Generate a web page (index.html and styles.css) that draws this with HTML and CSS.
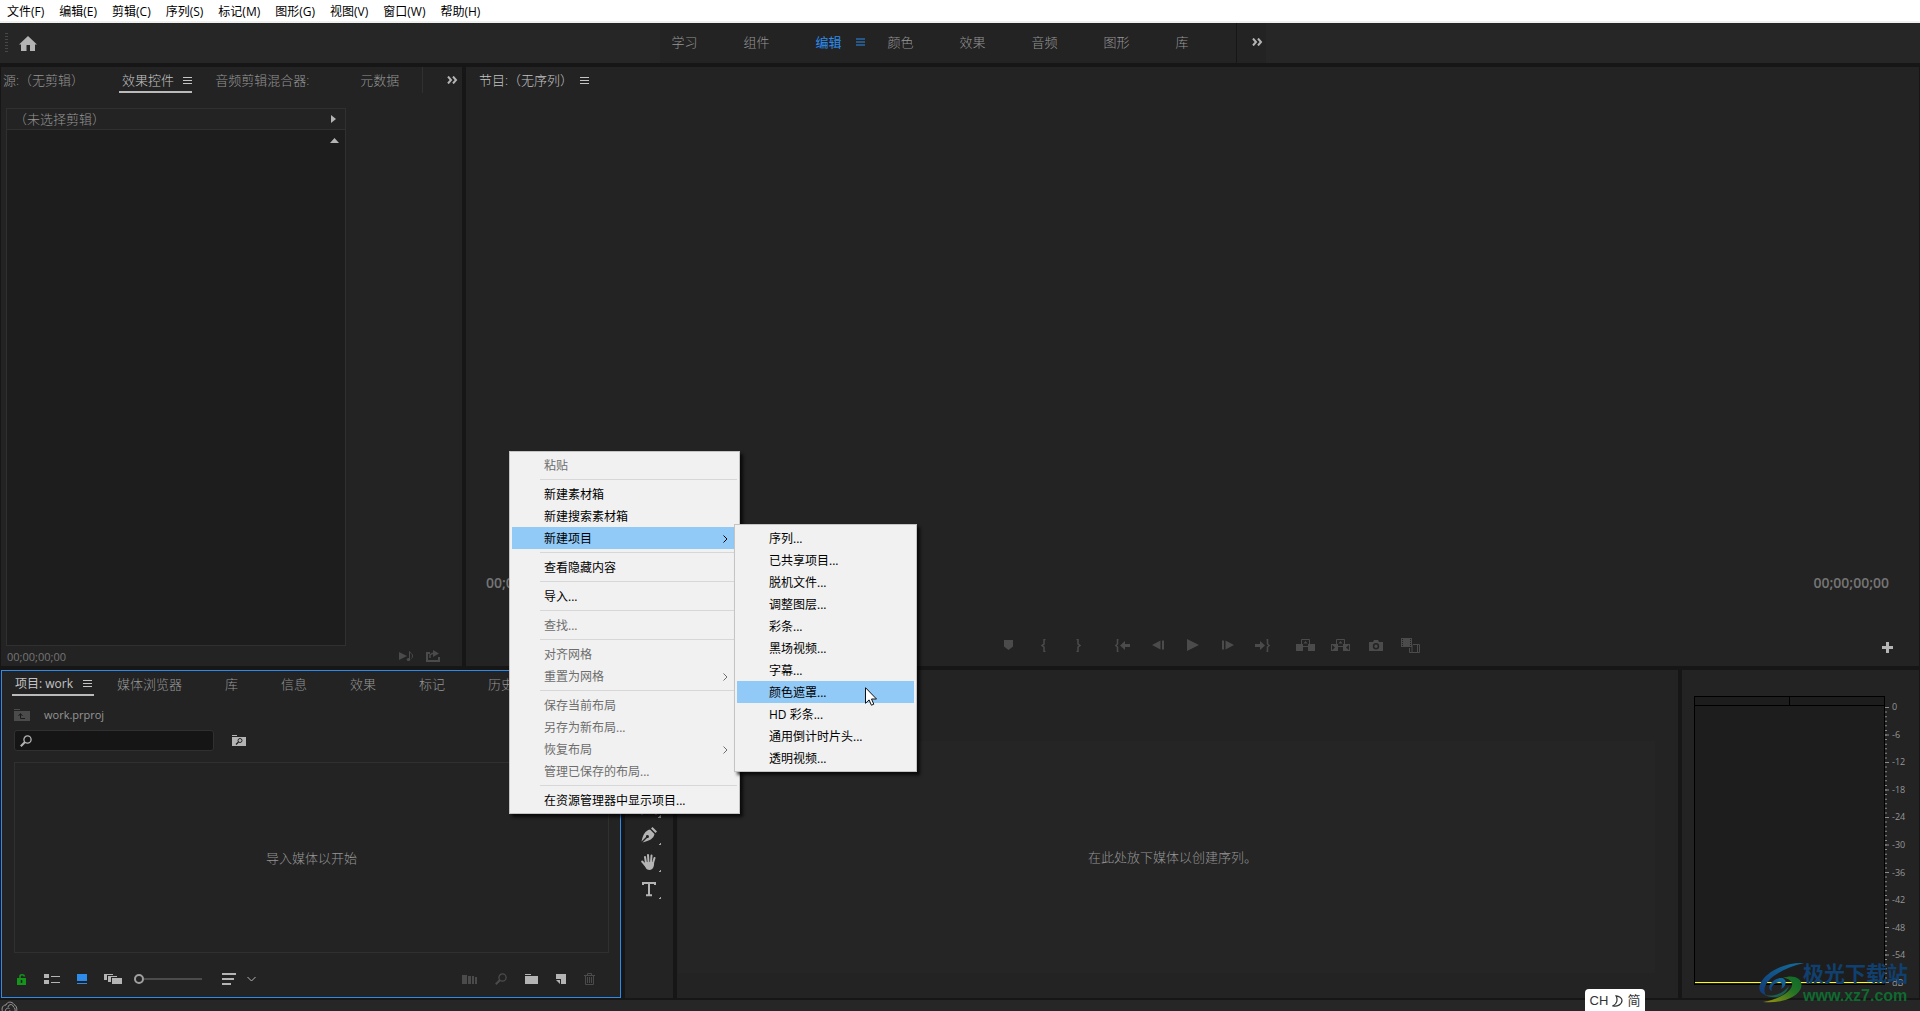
FILE: index.html
```html
<!DOCTYPE html>
<html lang="zh-CN">
<head>
<meta charset="utf-8">
<title>work.prproj</title>
<link rel="stylesheet" href="styles.css">
</head>
<body>
<svg class="defs" aria-hidden="true">
  <symbol id="menu-lines" viewBox="0 0 9 7"><path d="M0 .5h9M0 3.5h9M0 6.5h9" stroke="currentColor"/></symbol>
  <symbol id="more" viewBox="0 0 11 8"><path d="M1 .5l3 3.5-3 3.5M6 .5L9 4 6 7.5" fill="none" stroke="currentColor" stroke-width="2"/></symbol>
  <symbol id="chevron" viewBox="0 0 5 8"><path d="M.5.5L4 4 .5 7.5" fill="none" stroke="currentColor"/></symbol>
  <symbol id="magnifier" viewBox="0 0 12 12"><circle cx="7.5" cy="4.5" r="3.6" fill="none" stroke="currentColor" stroke-width="1.3"/><path d="M5 7L.8 11.2" stroke="currentColor" stroke-width="2"/></symbol>
</svg>

<nav class="menubar">
  <button>文件(F)</button><button>编辑(E)</button><button>剪辑(C)</button><button>序列(S)</button><button>标记(M)</button><button>图形(G)</button><button>视图(V)</button><button>窗口(W)</button><button>帮助(H)</button>
</nav>

<header class="workspace">
  <div class="side">
    <span class="grip"></span>
    <button class="home" aria-label="主页"><svg width="18" height="15" viewBox="0 0 18 15"><path d="M9 0l9 8.500h-2V15h-5V9H7.500v6H2V8.500H0z" fill="currentColor"/></svg></button>
  </div>
  <div class="spaces">
    <button>学习</button><button>组件</button><button class="current">编辑<svg width="9" height="8"><use href="#menu-lines"/></svg></button><button>颜色</button><button>效果</button><button>音频</button><button>图形</button><button>库</button>
    <button class="overflow" aria-label="更多工作区"><svg width="11" height="8"><use href="#more"/></svg></button>
  </div>
  <div class="side"></div>
</header>

<main class="panels">
  <div class="row upper">
    <section class="panel source">
      <div class="tabs">
        <button>源:（无剪辑）</button>
        <button class="active">效果控件<svg width="9" height="7"><use href="#menu-lines"/></svg></button>
        <button>音频剪辑混合器:</button>
        <button>元数据</button>
        <button class="overflow" aria-label="更多面板"><svg width="11" height="8"><use href="#more"/></svg></button>
      </div>
      <div class="effects">
        <div class="effects-head"><span>（未选择剪辑）</span><svg width="5" height="8" viewBox="0 0 5 8"><path d="M0 0l5 4-5 4z" fill="currentColor"/></svg></div>
        <div class="effects-body"><svg width="9" height="5" viewBox="0 0 9 5"><path d="M0 5l4.500-5L9 5z" fill="currentColor"/></svg></div>
      </div>
      <div class="source-foot">
        <span class="time">00;00;00;00</span>
        <button aria-label="播放音频"><svg width="15" height="12" viewBox="0 0 15 12"><path d="M0 2l8 4-8 4z" fill="currentColor"/><path d="M10.500 9V1.500c1 2 3 2 3 4.500 0 1-.5 2-1 2.500" fill="none" stroke="currentColor"/><ellipse cx="9.500" cy="9.500" rx="1.800" ry="1.500" fill="currentColor"/></svg></button>
        <button aria-label="导出"><svg width="15" height="12" viewBox="0 0 15 12"><path d="M4 3H1v8h12V7" fill="none" stroke="currentColor" stroke-width="2"/><path d="M7 0l6 3.500L7 7z" fill="currentColor"/><path d="M4 8V5l2-1.500h2" stroke="currentColor" stroke-width="1.500" fill="none"/></svg></button>
      </div>
    </section>

    <section class="panel program">
      <div class="tabs"><button class="title">节目:（无序列）<svg width="9" height="7"><use href="#menu-lines"/></svg></button></div>
      <div class="monitor"></div>
      <div class="times"><span>00;00;00;00</span><span>00;00;00;00</span></div>
      <div class="transport">
        <div class="group left">
          <button aria-label="添加标记"><svg width="9" height="10" viewBox="0 0 9 10"><path d="M0 0h9v6.500L4.500 10 0 6.500z" fill="currentColor"/></svg></button>
          <button aria-label="标记入点"><svg width="5" height="13" viewBox="0 0 5 13"><path d="M4.500.5H3V5L1 6.500 3 8v4.500h1.500" fill="none" stroke="currentColor" stroke-width="1.500"/></svg></button>
          <button class="spaced" aria-label="标记出点"><svg width="5" height="13" viewBox="0 0 5 13"><path d="M.5.5H2V5l2 1.500L2 8v4.500H.5" fill="none" stroke="currentColor" stroke-width="1.500"/></svg></button>
          <button aria-label="转到入点"><svg width="15" height="13" viewBox="0 0 15 13"><path d="M3.500.5H2.500V5L.8 6.500 2.500 8v4.500h1" fill="none" stroke="currentColor" stroke-width="1.500"/><path d="M5 6.500L10 2v3h5v3h-5v3z" fill="currentColor"/></svg></button>
          <button aria-label="后退一帧"><svg width="12" height="10" viewBox="0 0 12 10"><path d="M8.500.5v9L0 5zM10 .5h2v9h-2z" fill="currentColor"/></svg></button>
        </div>
        <button aria-label="播放"><svg width="12" height="12" viewBox="0 0 12 12"><path d="M0 0l12 6-12 6z" fill="currentColor"/></svg></button>
        <div class="group right">
          <button aria-label="前进一帧"><svg width="12" height="10" viewBox="0 0 12 10"><path d="M3.500.5v9L12 5zM0 .5h2v9H0z" fill="currentColor"/></svg></button>
          <button class="spaced" aria-label="转到出点"><svg width="15" height="13" viewBox="0 0 15 13"><path d="M11.500.5h1V5l1.700 1.500L12.500 8v4.500h-1" fill="none" stroke="currentColor" stroke-width="1.500"/><path d="M10 6.500L5 2v3H0v3h5v3z" fill="currentColor"/></svg></button>
          <button aria-label="提升"><svg width="19" height="12" viewBox="0 0 19 12"><path d="M0 5h7v7H0zM12 5h7v7h-7z" fill="currentColor"/><path d="M5.500 5V.5h8V5M7 7.500h5" fill="none" stroke="currentColor"/><path d="M9.500 2l2 2.500h-4z" fill="currentColor"/></svg></button>
          <button aria-label="提取"><svg width="19" height="12" viewBox="0 0 19 12"><path d="M0 5h7v7H0l4-3.500zM19 5h-7v7h7l-4-3.500z" fill="currentColor"/><path d="M.5 5v7M18.500 5v7M5.500 5V.5h8V5M7 7.500h5" fill="none" stroke="currentColor"/><path d="M9.500 2l2 2.500h-4z" fill="currentColor"/></svg></button>
          <button aria-label="导出帧"><svg width="14" height="11" viewBox="0 0 14 11"><path fill-rule="evenodd" d="M0 2h4l1-2h4l1 2h4v9H0zM7 3a3.200 3.200 0 100 6.400A3.200 3.200 0 007 3zm0 1.500a1.700 1.700 0 110 3.400 1.700 1.700 0 010-3.400z" fill="currentColor"/></svg></button>
          <button aria-label="比较视图"><svg width="19" height="15" viewBox="0 0 19 15"><path d="M0 0h11v9H0z" fill="currentColor"/><path d="M8.500 10v4.500h10v-8H12M11 6.500v8M16.500 6.500v8" fill="none" stroke="currentColor"/><path d="M1.500 1v8M9.500 1v8" stroke="#232323" stroke-dasharray="1 1"/></svg></button>
        </div>
        <button class="add" aria-label="按钮编辑器"><svg width="11" height="11" viewBox="0 0 11 11"><path d="M4 0h3v4h4v3H7v4H4V7H0V4h4z" fill="currentColor"/></svg></button>
      </div>
    </section>
  </div>

  <div class="row lower">
    <section class="panel project">
      <div class="tabs">
        <button class="active">项目: work<svg width="9" height="7"><use href="#menu-lines"/></svg></button>
        <button>媒体浏览器</button><button>库</button><button>信息</button><button>效果</button><button>标记</button><button>历史记录</button>
      </div>
      <div class="path"><svg width="16" height="12" viewBox="0 0 16 12"><path d="M0 0h6v1H0zM0 2h16v10H0z" fill="#4b4b4b"/><path d="M11 9.500H6.500V5M4.500 7l2-2.500 2 2.500" fill="none" stroke="#1c1c1c"/></svg><span>work.prproj</span></div>
      <div class="search">
        <label><svg width="12" height="12"><use href="#magnifier"/></svg><input type="text" aria-label="搜索项目"></label>
        <button aria-label="新建搜索素材箱"><svg width="14" height="11" viewBox="0 0 14 11"><path d="M0 0h5v1H0zM0 2h14v9H0z" fill="currentColor"/><circle cx="8" cy="5.500" r="2" fill="none" stroke="#232323"/><path d="M6.500 7L4 9.500" stroke="#232323" stroke-width="1.500"/></svg></button>
      </div>
      <div class="bin">导入媒体以开始</div>
      <div class="project-foot">
        <button class="lock" aria-label="项目可写"><svg width="10" height="11" viewBox="0 0 10 11"><path d="M0 4h9v7H0z" fill="currentColor"/><path d="M3 4V2.500C3 .3 7 .3 7.500 2.500" fill="none" stroke="currentColor" stroke-width="1.500"/><path d="M4.500 6v3" stroke="#123" stroke-width="1.500"/></svg></button>
        <button aria-label="列表视图"><svg width="16" height="10" viewBox="0 0 16 10"><path d="M0 0h5v4H0zM0 6h5v4H0zM7 2h9v1H7zM7 8h9v1H7z" fill="currentColor"/></svg></button>
        <button class="on" aria-label="图标视图"><svg width="10" height="10" viewBox="0 0 10 10"><path d="M0 0h10v7H0zM0 9h10v1H0z" fill="currentColor"/></svg></button>
        <button aria-label="自由变换视图"><svg width="18" height="10" viewBox="0 0 18 10"><path d="M8 4h10v6H8zM4 2h9v1H7v5H4zM0 0h9v1H3v5H0z" fill="currentColor"/></svg></button>
        <input type="range" min="0" max="100" value="0" aria-label="缩放">
        <button class="sort" aria-label="排序图标"><svg width="34" height="12" viewBox="0 0 34 12"><path d="M0 1h14M0 6h12M0 11h9" stroke="currentColor" stroke-width="2"/><path d="M25.500 4l4 4 4-4" fill="none" stroke="currentColor"/></svg></button>
        <div class="project-tools">
          <button class="off" aria-label="自动匹配序列"><svg width="15" height="9" viewBox="0 0 15 9"><path d="M0 0h5v9H0zM6 1h3v8H6zM10 1h2v8h-2zM13 2h2v7h-2z" fill="currentColor"/></svg></button>
          <button class="off" aria-label="查找"><svg width="12" height="12"><use href="#magnifier"/></svg></button>
          <button aria-label="新建素材箱"><svg width="13" height="10" viewBox="0 0 13 10"><path d="M0 0h6v1H0zM0 2h13v8H0z" fill="currentColor"/></svg></button>
          <button aria-label="新建项"><svg width="10" height="10" viewBox="0 0 10 10"><path d="M0 0h10v10H5V5H0zM0 6h4v4z" fill="currentColor"/></svg></button>
          <button class="off" aria-label="清除"><svg width="11" height="12" viewBox="0 0 11 12"><path d="M0 2.500h11M3.500 2V.5h4V2M1.500 3v8.500h8V3M3.500 4v6M5.500 4v6M7.500 4v6" fill="none" stroke="currentColor"/></svg></button>
        </div>
      </div>
    </section>

    <section class="panel tools">
      <button aria-label="选择工具"><svg width="16" height="16" viewBox="0 0 16 16"><path d="M3 0l10 10H7l-4 4z" fill="currentColor"/></svg></button>
      <button class="multi" aria-label="轨道选择工具"><svg width="16" height="16" viewBox="0 0 16 16"><path d="M0 7h9V4l5 4-5 4V9H0z" fill="currentColor"/></svg></button>
      <button class="multi" aria-label="波纹编辑工具"><svg width="16" height="16" viewBox="0 0 16 16"><path d="M8 0v16M0 8l5-4v8zM16 8l-5-4v8z" fill="currentColor" stroke="currentColor"/></svg></button>
      <button aria-label="剃刀工具"><svg width="16" height="16" viewBox="0 0 16 16"><path d="M2 10l9-9 4 4-9 9z" fill="currentColor"/></svg></button>
      <button class="multi" aria-label="外滑工具"><svg width="16" height="16" viewBox="0 0 16 16"><path d="M1 1v14M15 1v14M3 8l4-3v6zM13 8l-4-3v6z" fill="currentColor" stroke="currentColor"/></svg></button>
      <button class="multi" aria-label="钢笔工具"><svg width="16" height="16" viewBox="0 0 16 16"><path d="M10 1.500L11.500 0 16 4.500 14.500 6z" fill="currentColor"/><path d="M9 2.500L13.500 7c-1 5-5 6.500-12 8.500L6 11a1.500 1.500 0 10-1-1L.5 14.500C2 8 4 3.500 9 2.500z" fill="currentColor"/></svg></button>
      <button class="multi" aria-label="手形工具"><svg width="16" height="16" viewBox="0 0 16 16"><path d="M5 9L4 3M7.500 8L7 1M10 8l.5-6.500M12 9l1.500-5M5 12L1.200 7.500" stroke="currentColor" stroke-width="2" stroke-linecap="round"/><path d="M4 8h9c.5 4-1 8-4.500 8S4.500 13 3 10z" fill="currentColor"/></svg></button>
      <button class="multi" aria-label="文字工具"><svg width="16" height="16" viewBox="0 0 16 16"><path d="M2 4V2h12v2M8 2v12M5 14.200h6" fill="none" stroke="currentColor" stroke-width="2"/></svg></button>
    </section>

    <section class="panel timeline"><p>在此处放下媒体以创建序列。</p></section>

    <section class="panel meter">
      <div class="meter-box"><div class="peaks"><span></span><span></span></div><div class="level"></div></div>
      <svg class="ticks" viewBox="0 0 4 276" preserveAspectRatio="none"><path d="M0 .5h4M0 28h4M0 55.500h4M0 83h4M0 110.500h4M0 138h4M0 165.500h4M0 193h4M0 220.500h4M0 248h4M0 275.500h4" stroke="#8a8a8a"/><path d="M1 .5v275" stroke="#8a8a8a" stroke-width="2" stroke-dasharray="1 3.583" stroke-dashoffset=".5"/></svg>
      <ul class="scale"><li>0</li><li>-6</li><li>-12</li><li>-18</li><li>-24</li><li>-30</li><li>-36</li><li>-42</li><li>-48</li><li>-54</li><li>dB</li></ul>
    </section>
  </div>
</main>

<footer class="status"><svg width="17" height="12" viewBox="0 0 17 12"><path d="M3 12C-.5 9 1 4 5 4 6 .5 11 0 13 3.500c3 1.500 3.500 5.500 2 8.500M5 12c-2-3 1-6 3.500-4.500M7 6c1-3.500 5-3 5.500 0 2 1 2 4 1 6M8 12c-1-1 0-2.500 1.500-2" fill="none" stroke="#9a9a9a"/></svg></footer>

<div class="context main-menu" role="menu">
  <button disabled>粘贴</button><hr>
  <button>新建素材箱</button><button>新建搜索素材箱</button>
  <button class="selected">新建项目<svg width="5" height="8"><use href="#chevron"/></svg></button><hr>
  <button>查看隐藏内容</button><hr>
  <button>导入...</button><hr>
  <button disabled>查找...</button><hr>
  <button disabled>对齐网格</button>
  <button disabled>重置为网格<svg width="5" height="8"><use href="#chevron"/></svg></button><hr>
  <button disabled>保存当前布局</button><button disabled>另存为新布局...</button>
  <button disabled>恢复布局<svg width="5" height="8"><use href="#chevron"/></svg></button>
  <button disabled>管理已保存的布局...</button><hr>
  <button>在资源管理器中显示项目...</button>
</div>
<div class="context sub-menu" role="menu">
  <button>序列...</button><button>已共享项目...</button><button>脱机文件...</button><button>调整图层...</button><button>彩条...</button><button>黑场视频...</button><button>字幕...</button><button class="selected">颜色遮罩...</button><button>HD 彩条...</button><button>通用倒计时片头...</button><button>透明视频...</button>
</div>
<svg class="cursor" width="12" height="19" viewBox="0 0 12 19"><path d="M.5.7v15.600l3.600-3.400 2.300 5.300 2.400-1-2.300-5.200h5z" fill="#fff" stroke="#111"/></svg>

<div class="ime">CH <svg width="11" height="12" viewBox="0 0 11 12"><path d="M4 .8c2 4 1 8-3 10 4 1 9-1 9-5.500C10 3 7 1 4 .8z" fill="none" stroke="#333" stroke-width="1.200"/></svg> 简</div>

<div class="watermark">
  <svg width="46" height="42" viewBox="0 0 46 42">
    <defs>
      <linearGradient id="blue" x1="0" y1="1" x2="1" y2="0"><stop offset="0" stop-color="#123a78"/><stop offset="1" stop-color="#126f9c"/></linearGradient>
      <linearGradient id="green" x1="0" y1="1" x2="1" y2="0"><stop offset="0" stop-color="#a0960c"/><stop offset=".6" stop-color="#237324"/><stop offset="1" stop-color="#0d6a2c"/></linearGradient>
    </defs>
    <path d="M45 1C27 0 7 9 1 22c-2 6 1 10 6 11C0 23 16 8 45 1z" fill="url(#blue)"/>
    <path d="M13 29c-6-2-2-11 8-13 7-1 8 8 1 11 2-4 1-7-2-7-5 1-9 5-7 9z" fill="url(#blue)"/>
    <path d="M24 16c10-4 21 0 18 10C39 35 22 42 4 40c12-2 26-8 29-16 1-5-4-8-9-8z" fill="url(#green)"/>
    <path d="M4 32c8 4 20 0 26-8-3 10-14 15-26 8z" fill="#1b5f51"/>
  </svg>
  <div><b>极光下载站</b><i>www.xz7.com</i></div>
</div>
</body>
</html>
```
FILE: styles.css
```css
* { box-sizing: border-box; }

body {
  margin: 0;
  height: 100vh;
  display: flex;
  flex-direction: column;
  overflow: hidden;
  background: #161616;
  color: #969696;
  font: 300 13px/20px "Open Sans", "Noto Sans CJK SC", sans-serif;
}

button {
  padding: 0;
  border: 0;
  background: none;
  color: inherit;
  font: inherit;
  white-space: nowrap;
}

svg { display: block; flex: none; }
.defs { position: absolute; width: 0; height: 0; }

/* Application menu */
.menubar {
  flex: none;
  display: flex;
  gap: 15px;
  height: 23px;
  padding: 3px 7px 0;
  border-bottom: 2px solid #f0f0f0;
  background: #fff;
  color: #000;
  font-size: 12px;
  line-height: 18px;
  font-weight: 400;
}

/* Workspace switcher */
.workspace {
  flex: none;
  display: flex;
  height: 40px;
  background: #262626;
}
.side { flex: 1; display: flex; align-items: center; gap: 11px; padding-left: 5px; }
.side:last-child { padding: 0; }
.grip { width: 3px; height: 20px; background: repeating-linear-gradient(#484848 0 1px, transparent 1px 3px); }
.home { color: #b4b4b4; }
.spaces { display: flex; padding-left: 12px; background: #232323; }
.spaces button { display: flex; align-items: center; gap: 14px; width: 72px; padding-bottom: 2px; }
.spaces .current { color: #2d8ceb; font-weight: 400; }
.spaces .overflow { width: 30px; padding-left: 15px; border-left: 1px solid #161616; color: #b4b4b4; }
.spaces button:nth-last-child(2) { width: 60px; }

/* Panel frame */
.panels {
  flex: 1;
  min-height: 0;
  display: grid;
  grid-template-rows: minmax(0, 599fr) minmax(0, 328fr);
  gap: 4px;
  padding: 4px 1px 2px;
}
.row { display: grid; gap: 4px; }
.upper { grid-template-columns: minmax(0, 461fr) minmax(0, 1453fr); }
.lower { grid-template-columns: minmax(0, 620fr) 48px minmax(0, 1001fr) 237px; }
.panel { display: flex; flex-direction: column; min-width: 0; min-height: 0; background: #232323; }

.tabs { flex: none; display: flex; height: 27px; }
.tabs button { display: flex; align-items: center; flex: none; height: 26px; }
.tabs svg { margin-left: 9px; }
.tabs .active, .tabs .title { color: #c4c4c4; }
.tabs .active { border-bottom: 2px solid #bababa; padding-top: 2px; }

/* Effect controls */
.source .tabs { padding-left: 2px; }
.source .tabs .active { margin: 0 23px 0 35px; padding-left: 3px; }
.source .tabs button:nth-child(4) { margin-left: 51px; padding-right: 23px; }
.source .tabs .overflow { flex: 1; justify-content: flex-end; padding-right: 4px; border-left: 1px solid #303030; color: #b4b4b4; }
.effects {
  flex: 1;
  display: flex;
  flex-direction: column;
  margin: 14px 116px 0 5px;
  border: 1px solid #303030;
  background: #1d1d1d;
}
.effects-head {
  display: flex;
  align-items: center;
  justify-content: space-between;
  height: 21px;
  padding: 0 9px 0 7px;
  border-bottom: 1px solid #303030;
  background: #232323;
}
.effects svg { color: #b4b4b4; }
.effects-body { display: flex; justify-content: flex-end; padding: 8px 6px; }
.source-foot { display: flex; align-items: center; gap: 12px; height: 20px; padding: 0 21px 0 6px; color: #4b4b4b; }
.time { flex: 1; padding-top: 2px; color: #757575; font-size: 11px; font-weight: 400; }

/* Program monitor */
.program .tabs { padding-left: 13px; }
.program .tabs svg { margin-left: 7px; }
.monitor { flex: 1; }
.times { display: flex; justify-content: space-between; padding: 0 30px 0 20px; color: #757575; font-size: 14px; font-weight: 600; }
.transport {
  display: grid;
  grid-template-columns: 1fr 35px 1fr;
  height: 73px;
  padding-top: 31px;
  align-items: start;
  position: relative;
  color: #4b4b4b;
}
.transport button { display: flex; align-items: center; justify-content: center; width: 35px; height: 42px; }
.group { display: flex; }
.left { justify-content: flex-end; }
.left .spaced { margin-right: 9px; }
.right .spaced { margin-right: 8px; }
.transport .add { position: absolute; right: 14px; top: 33px; color: #b4b4b4; }

/* Project */
.project { border: 1px solid #2d8ceb; padding: 0 11px; }
.project .tabs { gap: 43px; overflow: hidden; height: 27px; margin-left: -1px; }
.project .tabs button { height: 25px; }
.project .tabs .active { padding-left: 3px; margin-right: -20px; font-size: 12px; font-weight: 400; }
.project .tabs .active svg { margin: 0 2px 0 10px; }
.path { display: flex; align-items: center; gap: 14px; height: 32px; padding: 2px 0 0 1px; font-size: 11px; font-weight: 400; }
.search { display: flex; align-items: center; gap: 18px; padding-left: 1px; }
.search label {
  display: flex;
  align-items: center;
  width: 200px;
  height: 21px;
  padding: 0 5px;
  border: 1px solid #303030;
  border-radius: 3px;
  background: #151515;
}
.search svg, .project-foot { color: #b4b4b4; }
.search input { width: 100%; min-width: 0; border: 0; background: none; color: #c4c4c4; outline: 0; }
.bin { flex: 1; display: flex; align-items: center; justify-content: center; margin: 11px 0 0 1px; border: 1px solid #303030; }
.project-foot { display: flex; align-items: center; height: 44px; padding: 8px 14px 0 4px; }
.project-foot button { margin-right: 17px; }
.project-foot .lock { color: #16941a; }
.project-foot .on { color: #2d8ceb; }
.project-foot input {
  appearance: none;
  width: 68px;
  height: 10px;
  margin: 0 20px 0 -5px;
  background: linear-gradient(#4b4b4b, #4b4b4b) 10px 4px / 58px 2px no-repeat;
}
.project-foot input::-webkit-slider-thumb { appearance: none; width: 10px; height: 10px; border: 2px solid #a0a0a0; border-radius: 50%; background: #232323; }
.project-tools { display: flex; align-items: center; flex: 1; justify-content: flex-end; gap: 18px; }
.project-tools button { margin: 0; }
.project-tools .off { color: #4b4b4b; }

/* Tools */
.tools { padding-top: 16px; align-items: center; color: #b4b4b4; }
.tools button { flex: none; display: flex; align-items: center; justify-content: center; width: 26px; height: 27px; position: relative; }
.tools .multi::after { content: ""; position: absolute; right: 1px; bottom: 3px; width: 3px; height: 3px; background: linear-gradient(135deg, transparent 50%, #a0a0a0 50%); }

/* Timeline */
.timeline { padding: 71px 23px 25px 1px; }
.timeline p { flex: 1; display: flex; align-items: center; justify-content: center; margin: 0; padding-left: 12px; background: #252525; }

/* Audio meter */
.meter { display: grid; grid-template-columns: 1fr 4px 30px; padding: 26px 0 13px 12px; }
.meter-box { display: flex; flex-direction: column; border: 1px solid #000; background: #1d1d1d; }
.peaks { display: flex; height: 9px; border-bottom: 1px solid #000; }
.peaks span { flex: 1; }
.peaks span:first-child { border-right: 1px solid #000; }
.level { flex: 1; margin-bottom: 1px; border-bottom: 1px solid #ff0; }
.ticks { width: 4px; height: calc(100% - 13px); margin-top: 11px; }
.scale { display: flex; flex-direction: column; justify-content: space-between; margin: 6px 0 -3px; padding: 0 0 0 3px; list-style: none; font-size: 9px; line-height: 10px; font-weight: 400; }

.status { flex: none; height: 11px; padding: 1px 1px 0; background: #262626; overflow: hidden; }

/* Popup menus */
.context {
  position: absolute;
  display: flex;
  flex-direction: column;
  padding: 2px;
  border: 1px solid #c4c4c4;
  background: #f1f1f1;
  box-shadow: 3px 3px 3px rgba(0, 0, 0, .7);
  color: #000;
  font-size: 12px;
  font-weight: 400;
}
.context button { display: flex; align-items: center; justify-content: space-between; height: 22px; padding: 1px 9px 0 32px; text-align: left; }
.context button:disabled { color: #6d6d6d; }
.context .selected { background: #91c9f7; }
.context hr { width: calc(100% - 28px); height: 1px; margin: 3px 0 3px 28px; border: 0; background: #d7d7d7; }
.main-menu { left: 509px; top: 451px; width: 231px; }
.sub-menu { left: 734px; top: 524px; width: 183px; }
.cursor { position: absolute; left: 865px; top: 687px; }

/* Input method indicator */
.ime {
  position: absolute;
  left: 1585px;
  bottom: 0;
  display: flex;
  align-items: center;
  justify-content: center;
  gap: 4px;
  width: 60px;
  height: 22px;
  padding-top: 2px;
  border-radius: 4px 4px 0 0;
  background: #fff;
  color: #333;
  font-family: "Liberation Sans", "Noto Sans CJK SC", sans-serif;
  font-weight: 400;
}

.watermark { position: absolute; right: 12px; bottom: 6px; display: flex; align-items: center; }
.watermark svg { margin-right: -2px; }
.watermark div { display: flex; flex-direction: column; }
.watermark b { color: #10406f; font-size: 21px; line-height: 27px; font-weight: 700; }
.watermark i { color: #0f6a30; font: bold 16px/18px "Liberation Sans", sans-serif; }
```
